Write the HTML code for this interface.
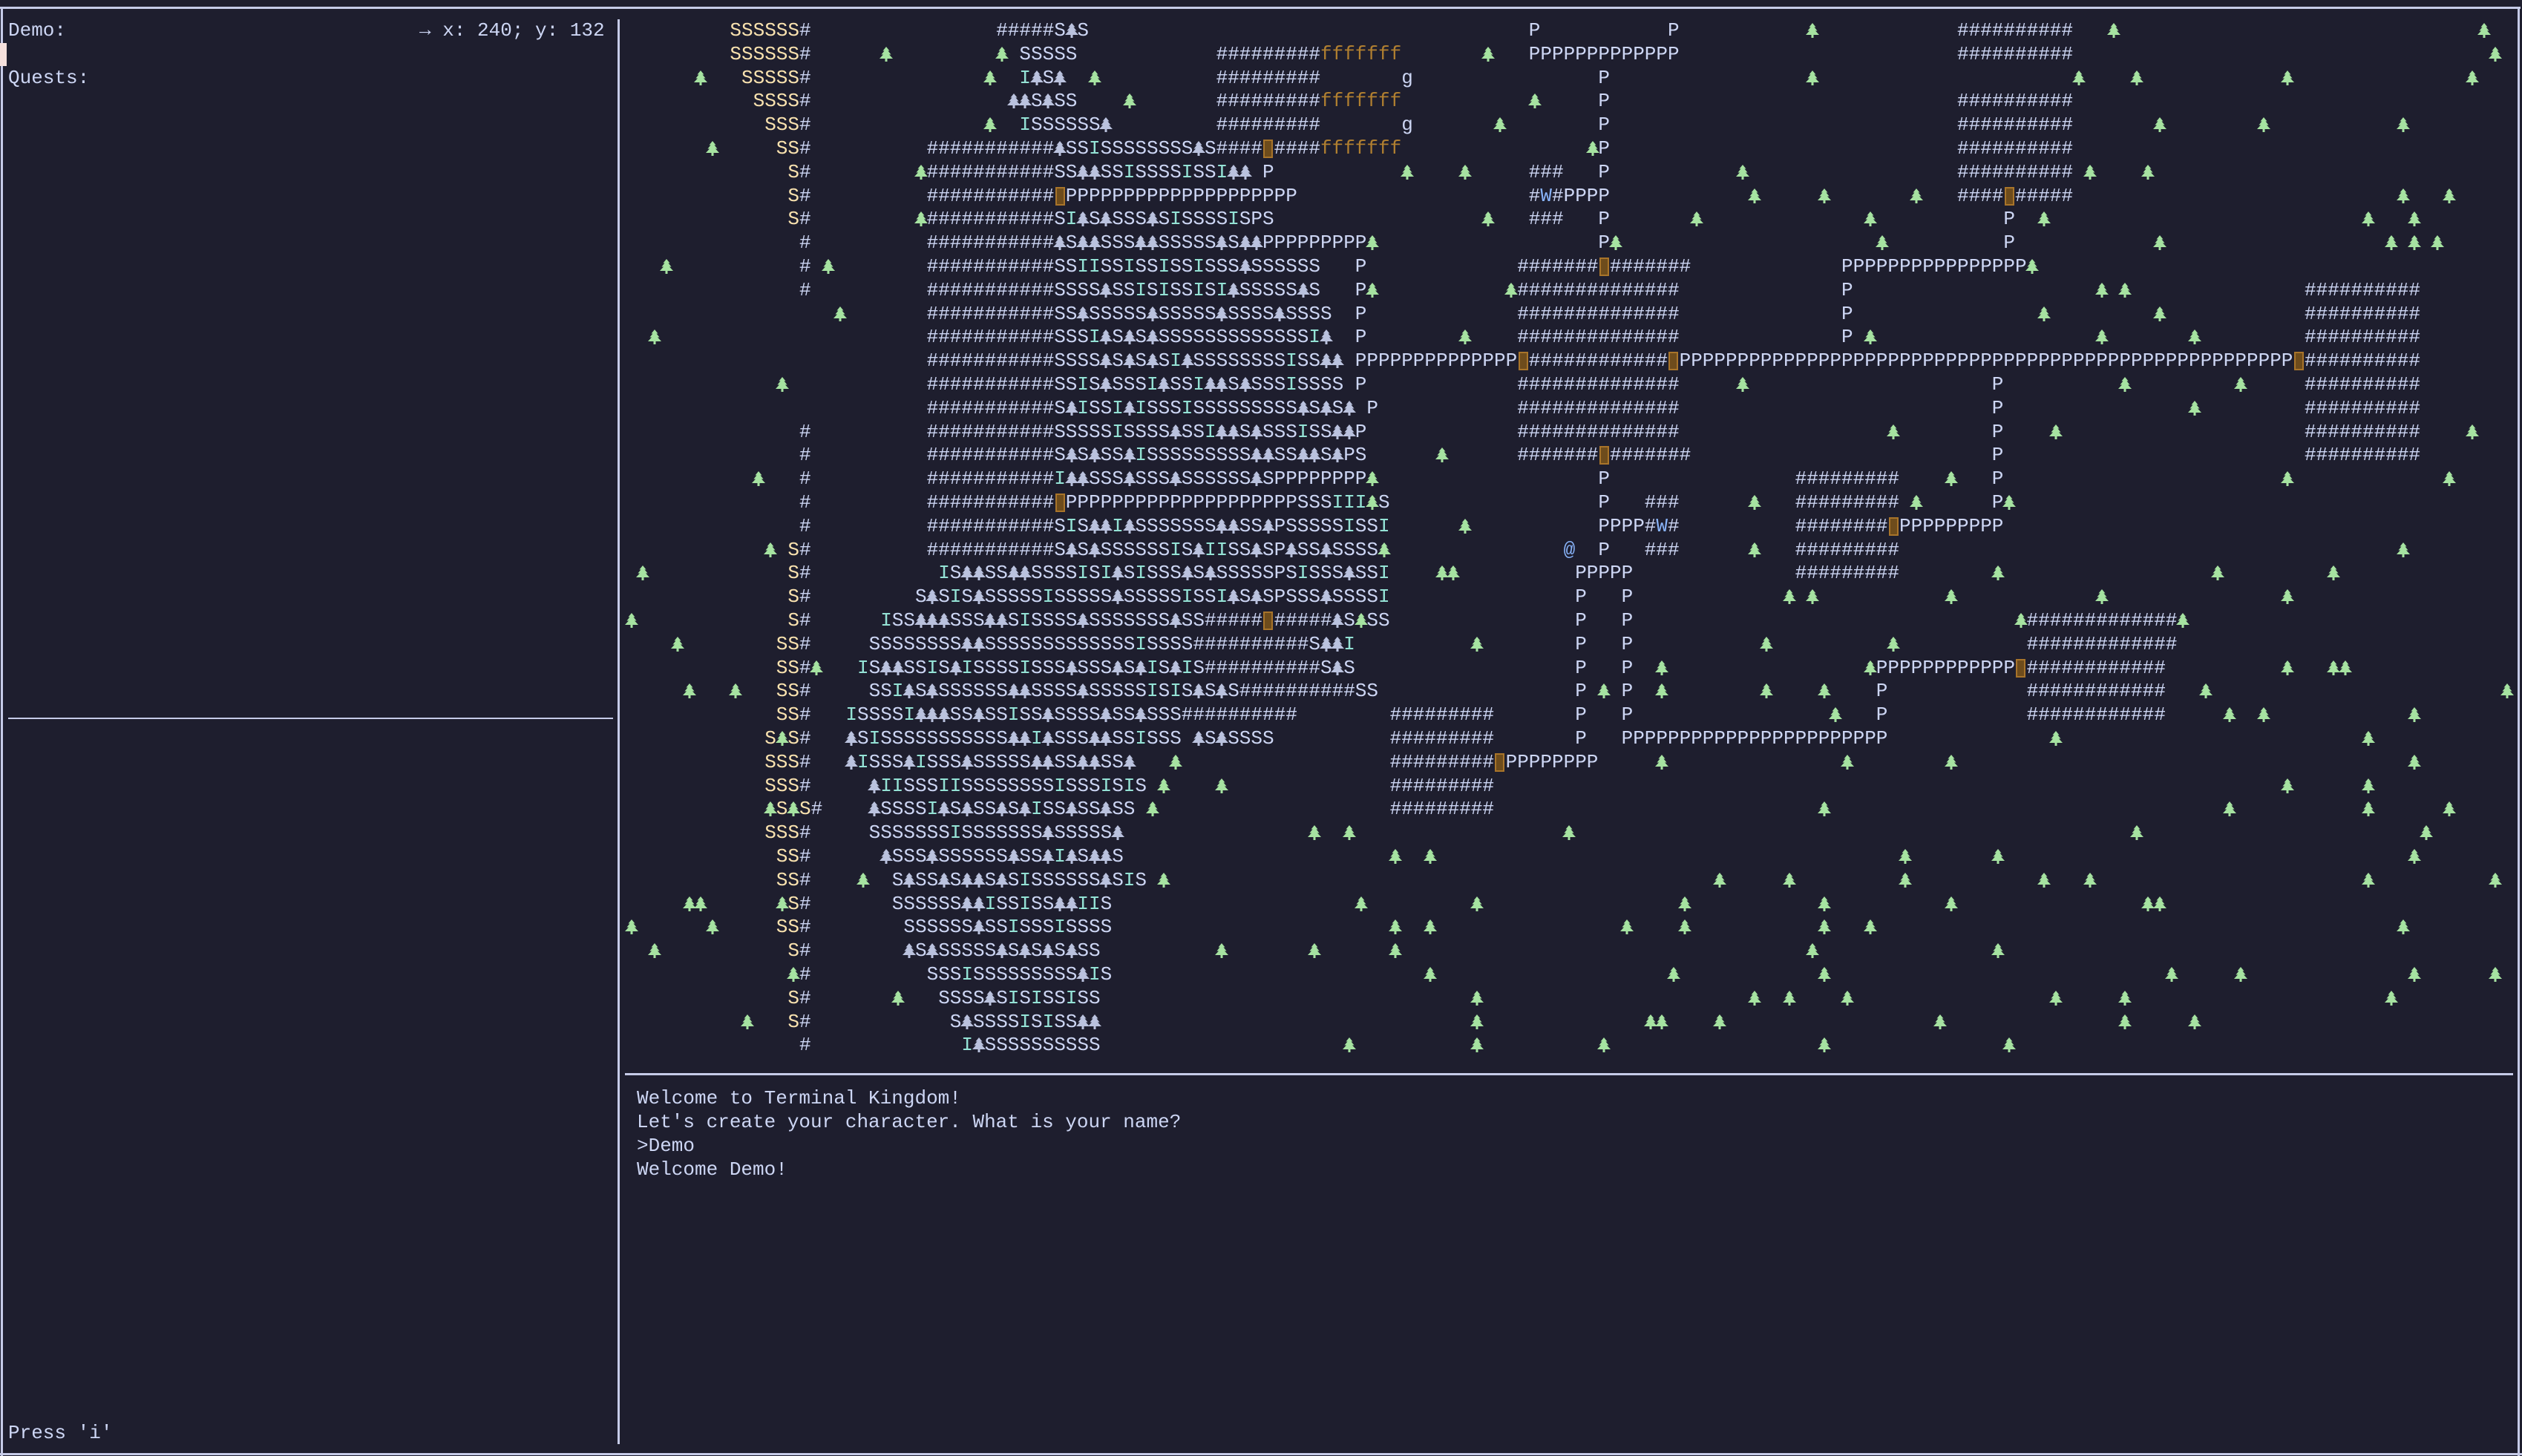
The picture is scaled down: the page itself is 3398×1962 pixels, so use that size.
<!DOCTYPE html>
<html><head><meta charset="utf-8">
<style>
html,body{margin:0;padding:0;background:#1e1e2e;}
body{width:3398px;height:1962px;position:relative;overflow:hidden;font-family:"Liberation Mono","DejaVu Sans Mono",monospace;font-size:26px;color:#cdd6f4;}
.ln{position:absolute;background:#c6cbe8;}
.t{position:absolute;white-space:pre;line-height:32px;}
#map{position:absolute;left:843px;top:25px;}
#map span{position:absolute;width:15.6px;text-align:center;line-height:32px;height:32px;}
#map svg{position:absolute;}
.d{position:absolute;box-sizing:border-box;width:13px;height:25px;border:2px solid #a8742a;background:#6e4c1c;}
</style></head><body>
<div class="ln" style="left:0;top:9px;width:3396px;height:3px"></div>
<div class="ln" style="left:1px;top:9px;width:3px;height:1953px"></div>
<div class="ln" style="left:3392px;top:9px;width:3px;height:1953px"></div>
<div class="ln" style="left:0;top:1958px;width:3398px;height:3px"></div>
<div class="ln" style="left:832px;top:26px;width:3px;height:1920px"></div>
<div class="ln" style="left:11px;top:967px;width:815px;height:2px"></div>
<div class="ln" style="left:842px;top:1446px;width:2544px;height:3px"></div>
<div style="position:absolute;left:0;top:58px;width:9px;height:31px;background:#f5e0dc"></div>
<div class="t" style="left:11px;top:25px">Demo:</div>
<div class="t" style="left:565px;top:25px">→ x: 240; y: 132</div>
<div class="t" style="left:11px;top:89px">Quests:</div>
<div class="t" style="left:11px;top:1915px">Press 'i'</div>
<div class="t" style="left:858px;top:1464px">Welcome to Terminal Kingdom!
Let's create your character. What is your name?
&gt;Demo
Welcome Demo!</div>
<div id="map"></div>
<script>
var P=function(n){return 'P'.repeat(n)};
var R=[
[[9,"SSSSSS#"],[32,"#####STS"],[78,"P"],[90,"P"],[102,"T"],[115,"##########"],[128,"T"],[160,"T"]],
[[9,"SSSSSS#"],[22,"T"],[32,"T SSSSS"],[51,"#########fffffff"],[74,"T"],[78,P(13)],[115,"##########"],[161,"T"]],
[[6,"T"],[10,"SSSSS#"],[31,"T"],[34,"ITST"],[40,"T"],[51,"#########"],[67,"g"],[84,"P"],[102,"T"],[125,"T"],[130,"T"],[143,"T"],[159,"T"]],
[[11,"SSSS#"],[33,"TTSTSS"],[43,"T"],[51,"#########fffffff"],[78,"T"],[84,"P"],[115,"##########"]],
[[12,"SSS#"],[31,"T"],[34,"ISSSSSST"],[51,"#########"],[67,"g"],[75,"T"],[84,"P"],[115,"##########"],[132,"T"],[141,"T"],[153,"T"]],
[[7,"T"],[13,"SS#"],[26,"###########TSSISSSSSSSSTS####D####fffffff"],[83,"TP"],[115,"##########"]],
[[14,"S#"],[25,"T###########SSTTSSISSSSISSITT P"],[67,"T"],[72,"T"],[78,"###"],[84,"P"],[96,"T"],[115,"########## T"],[131,"T"]],
[[14,"S#"],[26,"###########D"+P(20)],[78,"#W#PPPP"],[97,"T"],[103,"T"],[111,"T"],[115,"####D#####"],[153,"T"],[157,"T"]],
[[14,"S#"],[25,"T###########SITSTSSSTSISSSSISPS"],[74,"T"],[78,"###"],[84,"P"],[92,"T"],[107,"T"],[119,"P"],[122,"T"],[150,"T"],[154,"T"]],
[[15,"#"],[26,"###########TSTTSSSTTSSSSSTSTTPPPPPPPPPT"],[84,"PT"],[108,"T"],[119,"P"],[132,"T"],[152,"T"],[154,"T"],[156,"T"]],
[[3,"T"],[15,"#"],[17,"T"],[26,"###########SSIISSISSISSISSSTSSSSSS"],[63,"P"],[77,"#######D#######"],[105,P(16)],[121,"T"]],
[[15,"#"],[26,"###########SSSSTSSISISSISITSSSSSTS"],[63,"PT"],[76,"T##############"],[105,"P"],[127,"T"],[129,"T"],[145,"##########"]],
[[18,"T"],[26,"###########SSTSSSSSTSSSSSTSSSSTSSSS"],[63,"P"],[77,"##############"],[105,"P"],[122,"T"],[132,"T"],[145,"##########"]],
[[2,"T"],[26,"###########SSSITSTSTSSSSSSSSSSSSSIT"],[63,"P"],[72,"T"],[77,"##############"],[105,"P T"],[127,"T"],[135,"T"],[145,"##########"]],
[[26,"###########SSSSTSTSTSITSSSSSSSSISSTT"],[63,P(14)],[77,"D############D"],[91,P(53)],[144,"D##########"]],
[[13,"T"],[26,"###########SSISTSSSITSSITTSTSSSISSSS P"],[77,"##############"],[96,"T"],[118,"P"],[129,"T"],[139,"T"],[145,"##########"]],
[[26,"###########STISSITISSSISSSSSSSSSTSTST P"],[77,"##############"],[118,"P"],[135,"T"],[145,"##########"]],
[[15,"#"],[26,"###########SSSSSISSSSTSSITTSTSSSISSTTP"],[77,"##############"],[109,"T"],[118,"P"],[123,"T"],[145,"##########"],[159,"T"]],
[[15,"#"],[26,"###########STSTSSTISSSSSSSSSTTSSTTSTPS"],[70,"T"],[77,"#######D#######"],[118,"P"],[145,"##########"]],
[[11,"T"],[15,"#"],[26,"###########ITTSSSTSSSTSSSSSSTSPPPPPPPPT"],[84,"P"],[101,"#########"],[114,"T"],[118,"P"],[143,"T"],[157,"T"]],
[[15,"#"],[26,"###########D"+P(20)+"SSSIIITS"],[84,"P"],[88,"###"],[97,"T"],[101,"#########"],[111,"T"],[118,"PT"]],
[[15,"#"],[26,"###########SISTTITSSSSSSSTTSSTPSSSSSISSI"],[72,"T"],[84,"PPPP#W#"],[101,"########D"+P(9)]],
[[12,"T"],[14,"S#"],[26,"###########STSTSSSSSSISTIISSTSPTSSTSSSST"],[81,"@"],[84,"P"],[88,"###"],[97,"T"],[101,"#########"],[153,"T"]],
[[1,"T"],[14,"S#"],[27,"ISTTSSTTSSSSISITSISSSTSTSSSSSPSISSSTSSI"],[70,"TT"],[82,"PPPPP"],[101,"#########"],[118,"T"],[137,"T"],[147,"T"]],
[[14,"S#"],[25,"STSISTSSSSSISSSSSTSSSSSISSITSTSPSSSTSSSSI"],[82,"P"],[86,"P"],[100,"T"],[102,"T"],[114,"T"],[127,"T"],[143,"T"]],
[[0,"T"],[14,"S#"],[22,"ISSTTTSSSTTSISSSSTSSSSSSSTSS#####D#####TSTSS"],[82,"P"],[86,"P"],[120,"T#############T"]],
[[4,"T"],[13,"SS#"],[21,"SSSSSSSSTTSSSSSSSSSSSSSISSSS##########STTI"],[73,"T"],[82,"P"],[86,"P"],[98,"T"],[109,"T"],[121,"#############"]],
[[13,"SS#T"],[20,"ISTTSSISTISSSSISSSTSSSTSTISTIS##########STS"],[82,"P"],[86,"P"],[89,"T"],[107,"T"+P(12)+"D############"],[143,"T"],[147,"TT"]],
[[5,"T"],[9,"T"],[13,"SS#"],[21,"SSITSTSSSSSSTTSSSSTSSSSSISISTSTS##########SS"],[82,"P T P"],[89,"T"],[98,"T"],[103,"T"],[108,"P"],[121,"############"],[136,"T"],[162,"T"]],
[[13,"SS#"],[19,"ISSSSITTTSSTSSISSTSSSSTSSTSSS##########"],[66,"#########"],[82,"P"],[86,"P"],[104,"T"],[108,"P"],[121,"############"],[138,"T"],[141,"T"],[154,"T"]],
[[12,"STS#"],[19,"TSISSSSSSSSSSSTTITSSSTTSSISSS TSTSSSS"],[66,"#########"],[82,"P"],[86,P(23)],[123,"T"],[150,"T"]],
[[12,"SSS#"],[19,"TISSSTISSSTSSSSSTTSSTTSST"],[47,"T"],[66,"#########D"+P(8)],[89,"T"],[105,"T"],[114,"T"],[154,"T"]],
[[12,"SSS#"],[21,"TIISSSIISSSSSSSSISSSISIS T"],[51,"T"],[66,"#########"],[143,"T"],[150,"T"]],
[[12,"TSTS#"],[21,"TSSSSITSTSSTSTISSTSSTSS T"],[66,"#########"],[103,"T"],[138,"T"],[150,"T"],[157,"T"]],
[[12,"SSS#"],[21,"SSSSSSSISSSSSSSTSSSSST"],[59,"T"],[62,"T"],[81,"T"],[130,"T"],[155,"T"]],
[[13,"SS#"],[22,"TSSSTSSSSSSTSSTITSTTS"],[66,"T"],[69,"T"],[110,"T"],[118,"T"],[154,"T"]],
[[13,"SS#"],[20,"T"],[23,"STSSTSTTSTSISSSSSSTSIS"],[46,"T"],[94,"T"],[100,"T"],[110,"T"],[122,"T"],[126,"T"],[150,"T"],[161,"T"]],
[[5,"TT"],[13,"TS#"],[23,"SSSSSSTTISSISSTTIIS"],[63,"T"],[73,"T"],[91,"T"],[103,"T"],[114,"T"],[131,"TT"]],
[[0,"T"],[7,"T"],[13,"SS#"],[24,"SSSSSSTSSISSSISSSS"],[66,"T"],[69,"T"],[86,"T"],[91,"T"],[103,"T"],[107,"T"],[153,"T"]],
[[2,"T"],[14,"S#"],[24,"TSTSSSSSTSTSTSTSS"],[51,"T"],[59,"T"],[66,"T"],[102,"T"],[118,"T"]],
[[14,"T#"],[26,"SSSISSSSSSSSSTIS"],[69,"T"],[90,"T"],[103,"T"],[133,"T"],[139,"T"],[154,"T"],[161,"T"]],
[[14,"S#"],[23,"T"],[27,"SSSSTSISISSISS"],[73,"T"],[97,"T"],[100,"T"],[105,"T"],[123,"T"],[129,"T"],[152,"T"]],
[[10,"T"],[14,"S#"],[28,"STSSSSISISSTT"],[73,"T"],[88,"TT"],[94,"T"],[113,"T"],[129,"T"],[135,"T"]],
[[15,"#"],[29,"ITSSSSSSSSSS"],[62,"T"],[73,"T"],[84,"T"],[103,"T"],[119,"T"]]
];
var CW=15.6,RH=31.8,h=[];
var tree='M9 0L13.5 5.5H11.5L15.5 10.5H13L18 16H10.5V20H7.5V16H0L5 10.5H2.5L6.5 5.5H4.5Z';
R.forEach(function(row,r){
  var g=[];
  row.forEach(function(s){for(var i=0;i<s[1].length;i++)g[s[0]+i]=s[1][i];});
  for(var c=0;c<g.length;c++){
    var ch=g[c]; if(!ch||ch==' ')continue;
    var x=(c*CW).toFixed(1), y=(r*RH).toFixed(1);
    if(ch=='T'){
      var L=g[c-1],Rr=g[c+1];
      var inS=(c>16&&c<=62)&&(/[SIT]/.test(L||'')||/[SIT]/.test(Rr||''));
      var col=inS?'#bac2de':'#a6e3a1';
      h.push('<svg width="18" height="20" viewBox="0 0 18 20" style="left:'+(c*CW-1.2).toFixed(1)+'px;top:'+(r*RH+6).toFixed(1)+'px"><path d="'+tree+'" fill="'+col+'"/></svg>');
    } else if(ch=='D'){
      h.push('<div class="d" style="left:'+(c*CW+1.3).toFixed(1)+'px;top:'+(r*RH+4).toFixed(1)+'px"></div>');
    } else {
      var col='';
      if(ch=='S'&&c<=16)col='#f9e2af';
      else if(ch=='I')col='#94e2d5';
      else if(ch=='f')col='#b07f30';
      else if(ch=='W'||ch=='@')col='#89b4fa';
      h.push('<span style="left:'+x+'px;top:'+y+'px'+(col?';color:'+col:'')+'">'+ch+'</span>');
    }
  }
});
document.getElementById('map').innerHTML=h.join('');
</script>
</body></html>
